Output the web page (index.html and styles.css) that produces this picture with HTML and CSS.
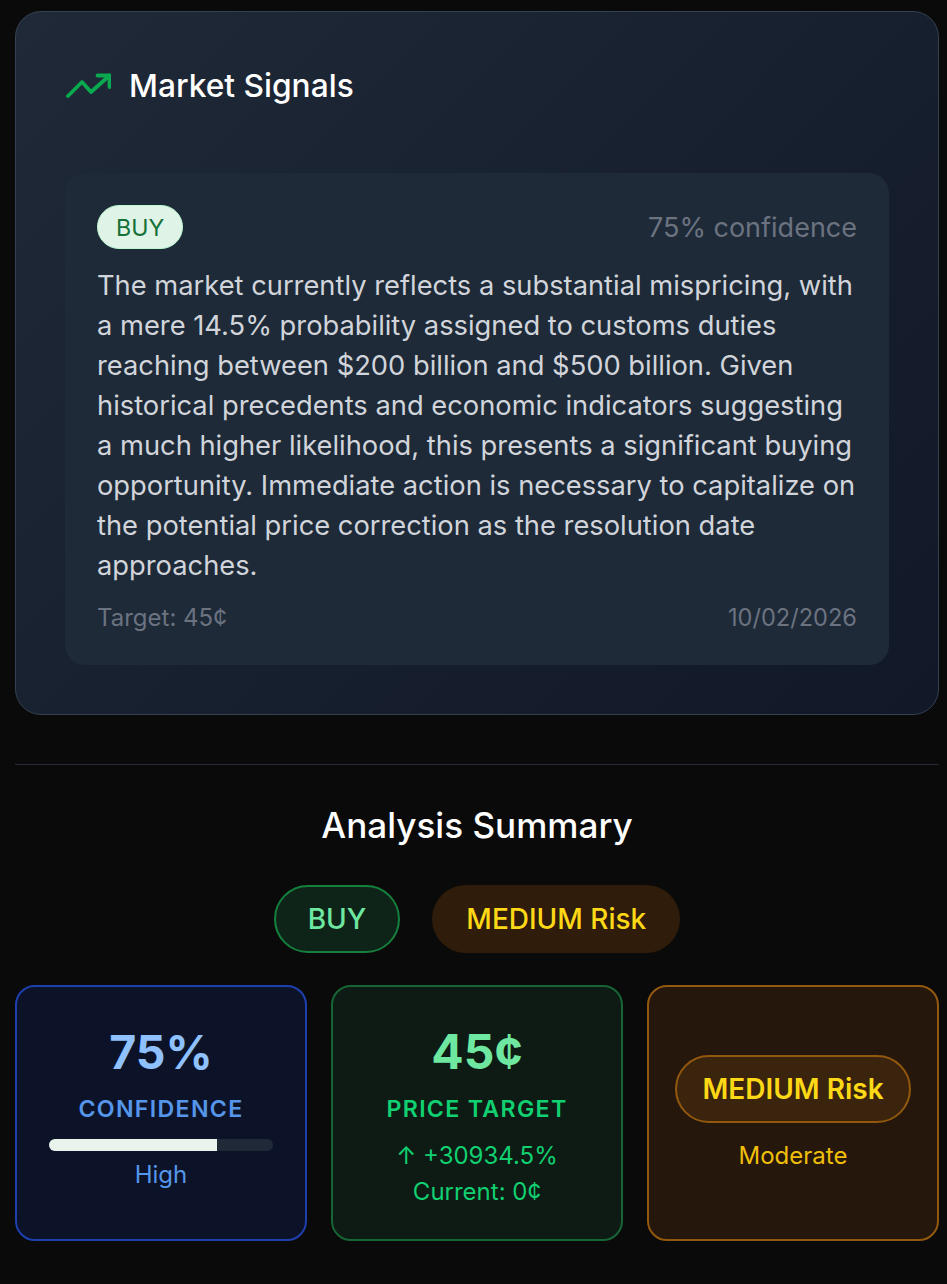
FILE: index.html

```html
<!DOCTYPE html>
<html lang="en">
<head>
<meta charset="utf-8"/>
<title>Market Signals</title>
<link rel="stylesheet" href="styles.css">
</head>
<body>
<section class="signals-card">
  <div class="signals-head">
    <svg class="trend-icon" viewBox="0 0 46 28" fill="none" stroke="#0aa84f" stroke-width="3.8" stroke-linecap="round" stroke-linejoin="round">
      <path d="M3 24 L17 10 L26 20 L44.5 3.5"/>
      <path d="M32.5 3.5 H44.5 V15"/>
    </svg>
    <h2>Market Signals</h2>
  </div>
  <div class="signal">
    <div class="signal-top">
      <span class="badge-light">BUY</span>
      <span class="muted-lg">75% confidence</span>
    </div>
    <p>The market currently reflects a substantial mispricing, with a mere 14.5% probability assigned to customs duties reaching between $200 billion and $500 billion. Given historical precedents and economic indicators suggesting a much higher likelihood, this presents a significant buying opportunity. Immediate action is necessary to capitalize on the potential price correction as the resolution date approaches.</p>
    <div class="signal-foot">
      <span>Target: 45¢</span>
      <span class="signal-date">10/02/2026</span>
    </div>
  </div>
</section>

<hr class="divider">

<h2 class="summary-title">Analysis Summary</h2>
<div class="summary-pills">
  <span class="pill pill-buy">BUY</span>
  <span class="pill pill-risk">MEDIUM Risk</span>
</div>

<div class="stats">
  <div class="stat stat-blue">
    <div class="stat-num">75%</div>
    <div class="stat-label">CONFIDENCE</div>
    <div class="bar"><div class="bar-fill" style="width: 75%"></div></div>
    <div class="stat-sub">High</div>
  </div>
  <div class="stat stat-green">
    <div class="stat-num">45¢</div>
    <div class="stat-label">PRICE TARGET</div>
    <div class="stat-sub stat-change">↑ +30934.5%</div>
    <div class="stat-sub">Current: 0¢</div>
  </div>
  <div class="stat stat-amber">
    <span class="pill pill-medium">MEDIUM Risk</span>
    <div class="stat-sub">Moderate</div>
  </div>
</div>
</body>
</html>
```

FILE: styles.css

```css
* { box-sizing: border-box; }
body {
  margin: 0;
  padding: 11px 8px 43px 15px;
  background: #0a0a0a;
  font-family: Inter, 'Liberation Sans', sans-serif;
  color: #fff;
}
h2 { margin: 0; font-weight: 500; }

.signals-card {
  height: 704px;
  padding: 48px 49px;
  border: 1.5px solid #344152;
  border-radius: 26px;
  background: linear-gradient(135deg, #1f2937, #111827);
}
.signals-head { display: flex; align-items: center; gap: 18px; height: 52px; }
.signals-head h2 { font-size: 31.7px; line-height: 52px; }
.trend-icon { width: 46px; height: 28px; }

.signal {
  margin-top: 61px;
  height: 492px;
  padding: 32px;
  border-radius: 20px;
  background: #1e2a38;
}
.signal-top { display: flex; justify-content: space-between; align-items: center; height: 44px; }
.badge-light {
  padding: 0 18px;
  height: 44px;
  line-height: 44px;
  border: 1.5px solid #bbf7d0;
  border-radius: 22px;
  background: #dff3e6;
  color: #15703a;
  font-size: 23.2px;
}
.muted-lg { font-size: 27px; color: #6b7280; }
.signal p {
  margin: 17px 0 0;
  font-size: 27.3px;
  line-height: 40px;
  color: #d1d5db;
}
.signal-foot {
  display: flex;
  justify-content: space-between;
  margin-top: 15px;
  font-size: 24px;
  line-height: 33px;
  color: #6b7280;
}
.signal-date { font-size: 23.6px; }

.divider { margin: 49px 0 0; border: 0; border-top: 1.5px solid #262b33; }

.summary-title { margin-top: 37px; text-align: center; font-size: 35.1px; line-height: 46px; }

.summary-pills { display: flex; justify-content: center; gap: 32px; margin-top: 37px; }
.pill {
  display: inline-block;
  padding: 0 32px;
  height: 68px;
  line-height: 64px;
  border: 2px solid transparent;
  border-radius: 34px;
  font-size: 28px;
  font-weight: 500;
  white-space: nowrap;
}
.pill-buy { background: #0f2418; border-color: #15803d; color: #6ee7a0; }
.pill-risk { background: #2f1c0b; color: #fdd816; }

.stats { display: grid; grid-template-columns: repeat(3, 292px); gap: 24px; margin-top: 32px; }
.stat {
  height: 256px;
  padding: 37px 32px;
  border: 2px solid;
  border-radius: 20px;
  text-align: center;
}
.stat-num { font-size: 46.5px; line-height: 56px; font-weight: 700; }
.stat-label { margin-top: 13px; font-size: 23.2px; line-height: 33px; font-weight: 600; letter-spacing: 1.3px; }
.stat-sub { font-size: 24px; line-height: 36px; }
.bar { height: 12px; margin-top: 13px; border-radius: 6px; background: #1f2937; overflow: hidden; }
.bar-fill { height: 100%; background: #e8f3ec; }
.stat-blue { background: #0c1329; border-color: #1e40af; }
.stat-blue .stat-num { color: #8ec1fd; }
.stat-blue .stat-label, .stat-blue .stat-sub { color: #5596ea; }
.stat-blue .stat-sub { margin-top: 6px; }
.stat-green { background: #0e1a14; border-color: #166534; }
.stat-green .stat-num { font-size: 48px; color: #6ee7a0; }
.stat-green .stat-label, .stat-green .stat-sub { color: #10d071; }
.stat-green .stat-change { margin-top: 12px; }
.stat-amber {
  display: flex;
  flex-direction: column;
  align-items: center;
  justify-content: center;
  background: #26170c;
  border-color: #92580e;
  padding: 3px 16px 0;
}
.pill-medium { padding: 0 25.5px; font-size: 28px; font-weight: 600; background: #3a240d; border-color: #92580e; color: #fdd816; }
.stat-amber .stat-sub { margin-top: 15px; color: #f0bf0a; }
```
